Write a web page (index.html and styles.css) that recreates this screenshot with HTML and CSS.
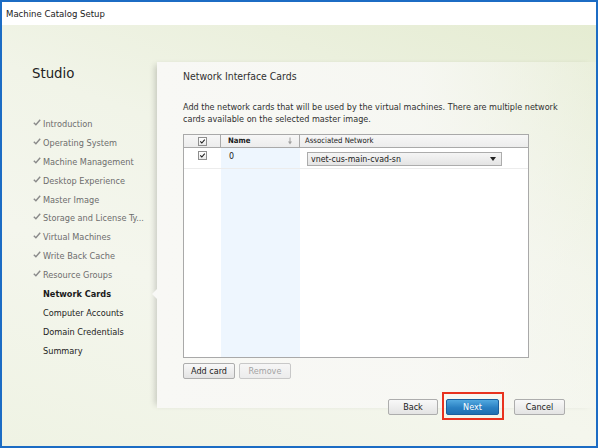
FILE: index.html
```html
<!DOCTYPE html>
<html>
<head>
<meta charset="utf-8">
<link rel="stylesheet" href="styles.css">
</head>
<body>
<div class="window">
  <div class="titlebar">Machine Catalog Setup</div>
  <div class="main">
    <div class="top">
      <div class="sidebar">
        <h1 class="studio">Studio</h1>
        <ul class="steps">
          <li class="step done"><svg class="chk" viewBox="0 0 8 7"><path d="M0.8 3.8 L2.9 5.8 L7.2 0.8"/></svg>Introduction</li>
          <li class="step done"><svg class="chk" viewBox="0 0 8 7"><path d="M0.8 3.8 L2.9 5.8 L7.2 0.8"/></svg>Operating System</li>
          <li class="step done"><svg class="chk" viewBox="0 0 8 7"><path d="M0.8 3.8 L2.9 5.8 L7.2 0.8"/></svg>Machine Management</li>
          <li class="step done"><svg class="chk" viewBox="0 0 8 7"><path d="M0.8 3.8 L2.9 5.8 L7.2 0.8"/></svg>Desktop Experience</li>
          <li class="step done"><svg class="chk" viewBox="0 0 8 7"><path d="M0.8 3.8 L2.9 5.8 L7.2 0.8"/></svg>Master Image</li>
          <li class="step done"><svg class="chk" viewBox="0 0 8 7"><path d="M0.8 3.8 L2.9 5.8 L7.2 0.8"/></svg>Storage and License Ty...</li>
          <li class="step done"><svg class="chk" viewBox="0 0 8 7"><path d="M0.8 3.8 L2.9 5.8 L7.2 0.8"/></svg>Virtual Machines</li>
          <li class="step done"><svg class="chk" viewBox="0 0 8 7"><path d="M0.8 3.8 L2.9 5.8 L7.2 0.8"/></svg>Write Back Cache</li>
          <li class="step done"><svg class="chk" viewBox="0 0 8 7"><path d="M0.8 3.8 L2.9 5.8 L7.2 0.8"/></svg>Resource Groups</li>
          <li class="step current"><span class="spacer"></span>Network Cards</li>
          <li class="step"><span class="spacer"></span>Computer Accounts</li>
          <li class="step"><span class="spacer"></span>Domain Credentials</li>
          <li class="step"><span class="spacer"></span>Summary</li>
        </ul>
      </div>
      <div class="panel">
        <h2 class="heading">Network Interface Cards</h2>
        <p class="desc">Add the network cards that will be used by the virtual machines. There are multiple network cards available on the selected master image.</p>
        <div class="grid">
          <div class="th th-chk"><span class="cb"><svg viewBox="0 0 9 9"><path d="M1.6 4.4 L3.6 6.4 L7.4 2.2"/></svg></span></div>
          <div class="th th-name">Name<svg class="sort" viewBox="0 0 6 8"><path d="M3 0.5 V6" class="sl"/><path d="M1 4.5 L3 7.5 L5 4.5 Z" class="sa"/></svg></div>
          <div class="th th-net">Associated Network</div>
          <div class="td td-chk"><span class="cb"><svg viewBox="0 0 9 9"><path d="M1.6 4.4 L3.6 6.4 L7.4 2.2"/></svg></span></div>
          <div class="td td-name">0</div>
          <div class="td td-net">
            <div class="select"><span>vnet-cus-main-cvad-sn</span><span class="caret"></span></div>
          </div>
          <div class="fill"></div>
          <div class="fill fill-name"></div>
          <div class="fill"></div>
        </div>
        <div class="tablebtns">
          <button class="btn">Add card</button>
          <button class="btn disabled">Remove</button>
        </div>
      </div>
    </div>
    <div class="footer">
      <button class="btn nav back">Back</button>
      <div class="highlight"><button class="btn nav primary">Next</button></div>
      <button class="btn nav cancel">Cancel</button>
    </div>
  </div>
</div>
</body>
</html>
```

FILE: styles.css
```css
* { box-sizing: border-box; }
html, body { margin: 0; padding: 0; }
body {
  font-family: "DejaVu Sans Condensed", "DejaVu Sans", sans-serif;
  font-stretch: semi-condensed;
  color: #1f1f1f;
  background: #ffffff;
}
.window {
  width: 598px;
  height: 448px;
  border: 2px solid #1c6cc4;
  display: flex;
  flex-direction: column;
  overflow: hidden;
}
.titlebar {
  height: 23px;
  line-height: 23px;
  padding-left: 4px;
  font-size: 9.5px;
  color: #1a1a1a;
  background: #ffffff;
  flex: none;
}
.main {
  flex: 1;
  display: flex;
  flex-direction: column;
  background: linear-gradient(200deg, #e5ecd2 0%, #f1f4e8 40%, #f4f6ed 65%, #eff3e4 100%);
}
.top {
  display: flex;
  flex: none;
}
.sidebar {
  width: 155px;
  flex: none;
  padding: 39px 0 0 30px;
}
.studio {
  margin: 0;
  font-size: 14.8px;
  line-height: 18px;
  font-weight: normal;
  color: #222;
}
.steps {
  list-style: none;
  margin: 32.5px 0 0 0;
  padding: 0;
}
.step {
  position: relative;
  height: 18.9px;
  display: flex;
  align-items: center;
  padding-left: 1px;
  font-size: 9.1px;
  color: #1c1c1c;
  white-space: nowrap;
}
.step.done { color: #6d6d6d; }
.step.current { font-weight: bold; color: #1a1a1a; }
.step.current::after {
  content: "";
  position: absolute;
  right: 0;
  top: 50%;
  margin-top: -5px;
  border-right: 5px solid #f8f8f6;
  border-top: 5px solid transparent;
  border-bottom: 5px solid transparent;
}
.chk {
  width: 8px;
  height: 7px;
  margin-right: 2px;
  margin-top: -3px;
  fill: none;
  stroke: #8a8a8a;
  stroke-width: 1.4;
}
.spacer { width: 10px; flex: none; }
.panel {
  flex: 1;
  margin-top: 37px;
  height: 346px;
  padding: 6.5px 0 0 26px;
  background: linear-gradient(to right, rgba(248,248,245,1) 0%, rgba(248,248,245,0.85) 60%, rgba(248,248,245,0.2) 100%);
  box-shadow: -5px 0 6px -3px rgba(0,0,0,0.18);
}
.heading {
  margin: 0;
  font-size: 10.4px;
  line-height: 14px;
  font-weight: normal;
  color: #303030;
}
.desc {
  margin: 18.5px 0 0 0;
  width: 380px;
  font-size: 9px;
  line-height: 12px;
  color: #303030;
}
.grid {
  margin-top: 9px;
  width: 346px;
  height: 224px;
  border: 1px solid #a9a9a9;
  background: #ffffff;
  display: grid;
  grid-template-columns: 37px 79px 1fr;
  grid-template-rows: 13px 21px 1fr;
}
.th {
  background: linear-gradient(#f7f7f7, #ececec);
  border-bottom: 1px solid #a9a9a9;
  font-size: 7.7px;
  line-height: 12px;
  color: #1a1a1a;
  display: flex;
  align-items: center;
}
.th-chk { border-right: 1px solid #a9a9a9; justify-content: center; }
.th-name { border-right: 1px solid #a9a9a9; padding-left: 7px; font-weight: bold; position: relative; }
.th-net { padding-left: 5px; }
.sort {
  position: absolute;
  right: 6px;
  top: 2px;
  width: 6px;
  height: 8px;
}
.sort .sl { stroke: #a0a0a0; stroke-width: 1; fill: none; }
.sort .sa { fill: #a0a0a0; }
.cb {
  width: 9px;
  height: 9px;
  border: 1px solid #8e8e8e;
  background: linear-gradient(#ffffff, #e9e9e9);
  display: block;
}
.cb svg {
  display: block;
  width: 7px;
  height: 7px;
  fill: none;
  stroke: #1a1a1a;
  stroke-width: 1.3;
}
.td {
  border-bottom: 1px solid #ececec;
  font-size: 8.8px;
}
.td-chk { display: flex; justify-content: center; padding-top: 3px; }
.td-name { background: #eef6fe; padding: 2px 0 0 8px; line-height: 12px; color: #1a1a1a; }
.td-net { padding: 4px 0 0 7px; }
.select {
  width: 195px;
  height: 14px;
  border: 1px solid #acacac;
  background: linear-gradient(#f5f5f5, #e4e4e4);
  display: flex;
  align-items: center;
  justify-content: space-between;
  padding: 0 5px 0 3px;
  font-size: 8.75px;
  color: #1a1a1a;
}
.caret {
  width: 0;
  height: 0;
  border-left: 3.5px solid transparent;
  border-right: 3.5px solid transparent;
  border-top: 4px solid #222;
}
.fill-name { background: #eef6fe; }
.tablebtns {
  margin-top: 5px;
  display: flex;
  gap: 4px;
}
.btn {
  font-family: inherit;
  font-stretch: semi-condensed;
  width: 52px;
  height: 16px;
  padding: 0;
  border: 1px solid #adadad;
  border-radius: 2px;
  background: linear-gradient(#f8f8f8, #e3e3e3);
  font-size: 9px;
  color: #1a1a1a;
  line-height: 14px;
}
.btn.disabled {
  color: #a3a3a3;
  border-color: #c8c8c8;
  background: linear-gradient(#f6f6f6, #ececec);
}
.footer {
  margin-top: -16px;
  display: flex;
  justify-content: flex-end;
  align-items: flex-start;
  padding-right: 31px;
  position: relative;
}
.nav.back { margin-top: 7px; width: 50px; margin-right: 4px; }
.highlight {
  border: 2px solid #e8321f;
  padding: 5px 3px 3px 2px;
  margin-right: 10px;
}
.nav.primary {
  display: block;
  width: 53px;
  border-color: #1b5e9c;
  background: linear-gradient(#52a9e0, #2a80c2 55%, #1f70b2);
  color: #ffffff;
}
.nav.cancel { margin-top: 7px; width: 51px; }
```
